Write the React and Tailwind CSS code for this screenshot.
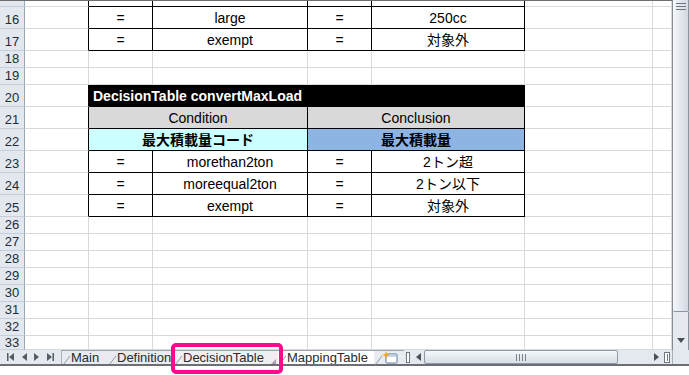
import React from 'react';

const font = "font-['Liberation_Sans','Noto_Sans_CJK_JP',sans-serif]";
const GRID = 'grid grid-cols-[25px_64px_64px_155px_64px_153px_128px_19px]';

// cell border presets
const G = 'border-r border-b border-[#d9d9d9]';
const K = 'border-r border-b border-black';
const AK = 'border-r border-b border-r-black border-b-[#d9d9d9]';

function Hd({ n, top }) {
  return (
    <div
      className={`flex justify-center overflow-hidden border-r border-b border-r-[#9aa7b8] border-b-[#c5ceda] bg-[#e3e8ef] text-[13px] leading-none text-[#1d2b3d] ${
        top ? 'items-start' : 'items-end pb-[2px]'
      }`}
    >
      {n}
    </div>
  );
}

function Cell({ cls = '', children }) {
  return (
    <div className={`flex items-center justify-center overflow-hidden whitespace-nowrap pt-[1px] text-[14px] leading-none text-black ${cls}`}>
      {children}
    </div>
  );
}

function Blank({ n, h, top }) {
  return (
    <div className={`${GRID} ${h}`}>
      <Hd n={n} top={top} />
      <Cell cls={G} />
      <Cell cls={G} />
      <Cell cls={G} />
      <Cell cls={G} />
      <Cell cls={G} />
      <Cell cls={G} />
      <Cell cls={G} />
    </div>
  );
}

function DataRow({ n, h, c, e, jp }) {
  return (
    <div className={`${GRID} ${h}`}>
      <Hd n={n} />
      <Cell cls={AK} />
      <Cell cls={K}>{n ? '=' : ''}</Cell>
      <Cell cls={K}>{c}</Cell>
      <Cell cls={K}>{n ? '=' : ''}</Cell>
      <Cell cls={`${K} ${jp ? 'text-[13px]' : ''}`}>{e}</Cell>
      <Cell cls={G} />
      <Cell cls={G} />
    </div>
  );
}

function VScroll() {
  return (
    <div className="flex h-[350px] w-[17px] flex-col border-l border-[#868d97] bg-[#e6eaf0]">
      <div className="flex h-[312px] flex-col items-center rounded-b-[2px] border-r border-b border-[#8d949e] bg-gradient-to-r from-[#f5f7fa] to-[#d3d9e2] pt-[2px]">
        <div className="mt-[1px] h-[1px] w-[10px] bg-[#6c737d]" />
        <div className="mt-[2px] h-[1px] w-[10px] bg-[#6c737d]" />
        <div className="mt-[2px] h-[1px] w-[10px] bg-[#6c737d]" />
      </div>
      <div className="flex flex-1 items-end justify-center border-r border-[#8d949e] pb-[7px]">
        <svg width="8" height="5" viewBox="0 0 8 5">
          <polygon points="0,0 8,0 4,5" fill="#4a5058" />
        </svg>
      </div>
    </div>
  );
}

function Tab({ w, label, bg = 'bg-[#e8ecf1]', notch }) {
  return (
    <div className={`relative flex h-full items-center overflow-hidden border-t border-[#9aa3ae] ${bg} ${w}`}>
      <svg className="absolute left-0 top-0" width="10" height="14" viewBox="0 0 10 14">
        <line x1="1" y1="14" x2="8" y2="5" stroke="#8f98a3" strokeWidth="1" />
      </svg>
      <span className="ml-[9px] whitespace-nowrap text-[13px] leading-none text-[#2b2b2b]">{label}</span>
      {notch ? (
        <svg className="absolute bottom-0 right-[2px]" width="5" height="5" viewBox="0 0 5 5">
          <polygon points="5,0 5,5 0,5" fill="#9aa3ae" />
        </svg>
      ) : null}
    </div>
  );
}

function TabBar() {
  return (
    <div className="relative flex h-[14px] w-[689px] bg-[#e4e9ef]">
      <div className="flex h-full w-[62px] items-center justify-around border-r border-[#a8b0bb] px-[3px]">
        <svg width="7" height="8" viewBox="0 0 7 8">
          <rect x="0" y="0" width="1.5" height="8" fill="#555c66" />
          <polygon points="7,0 7,8 2,4" fill="#555c66" />
        </svg>
        <svg width="5" height="8" viewBox="0 0 5 8">
          <polygon points="5,0 5,8 0,4" fill="#555c66" />
        </svg>
        <svg width="5" height="8" viewBox="0 0 5 8">
          <polygon points="0,0 0,8 5,4" fill="#555c66" />
        </svg>
        <svg width="7" height="8" viewBox="0 0 7 8">
          <polygon points="0,0 0,8 5,4" fill="#555c66" />
          <rect x="5.5" y="0" width="1.5" height="8" fill="#555c66" />
        </svg>
      </div>
      <Tab w="w-[46px]" label="Main" />
      <Tab w="w-[66px]" label="Definition" />
      <Tab w="w-[104px]" label="DecisionTable" bg="bg-[#eef0f3]" notch />
      <Tab w="w-[96px]" label="MappingTable" bg="bg-white" />
      <div className="relative flex h-full w-[30px] items-center border-t border-[#9aa3ae] bg-[#e8ecf1]">
        <svg className="absolute left-0 top-0" width="10" height="14" viewBox="0 0 10 14">
          <line x1="1" y1="14" x2="8" y2="5" stroke="#8f98a3" strokeWidth="1" />
        </svg>
        <svg className="ml-[8px]" width="16" height="13" viewBox="0 0 16 13">
          <rect x="4" y="3" width="11" height="9" rx="1" fill="#ffffff" stroke="#5d7ea8" />
          <rect x="5" y="4" width="9" height="2" fill="#c9d8ec" />
          <polygon points="4,0 5,3 8,4 5,5 4,8 3,5 0,4 3,3" fill="#f2a51b" />
        </svg>
      </div>
      <div className="flex h-full w-[8px] items-center justify-center">
        <div className="h-[11px] w-[4px] border border-[#6f7680] bg-white" />
      </div>
      <div className="flex h-full w-[12px] items-center justify-center">
        <svg width="5" height="8" viewBox="0 0 5 8">
          <polygon points="5,0 5,8 0,4" fill="#4a5058" />
        </svg>
      </div>
      <div className="flex h-full w-[194px] items-center justify-center rounded-[2px] border border-[#9199a4] bg-gradient-to-b from-[#f5f7fa] to-[#d8dee6]">
        <div className="flex gap-[2px]">
          <div className="h-[7px] w-[1px] bg-[#7b828c]" />
          <div className="h-[7px] w-[1px] bg-[#7b828c]" />
          <div className="h-[7px] w-[1px] bg-[#7b828c]" />
          <div className="h-[7px] w-[1px] bg-[#7b828c]" />
        </div>
      </div>
      <div className="h-full w-[32px]" />
      <div className="flex h-full w-[12px] items-center justify-center">
        <svg width="5" height="8" viewBox="0 0 5 8">
          <polygon points="0,0 0,8 5,4" fill="#4a5058" />
        </svg>
      </div>
      <div className="flex h-full w-[10px] items-center justify-center">
        <div className="flex h-[11px] w-[6px] items-center justify-center border border-[#6f7680] bg-white">
          <div className="h-[7px] w-[1px] bg-[#6f7680]" />
        </div>
      </div>
      <div className="h-full w-[17px] border-l border-[#a8b0bb] bg-[#e4e9ef]" />

      <div className="pointer-events-none absolute left-[171px] top-[-7px] h-[31px] w-[112px] rounded-[5px] border-[4px] border-[#ff0a8c]" />
    </div>
  );
}

export default function App() {
  return (
    <div className={`${font} relative h-[375px] w-[689px] overflow-hidden bg-white`}>
      <div className="flex h-[350px]">
        <div className="flex w-[672px] flex-col">
          <div className="h-[1px] bg-[#6e6e6e]" />
          <DataRow n="" h="h-[6px]" c="" e="" />
          <DataRow n="16" h="h-[22px]" c="large" e="250cc" />
          <DataRow n="17" h="h-[22px]" c="exempt" e="対象外" jp />
          <Blank n="18" h="h-[17px]" />
          <Blank n="19" h="h-[17px]" />

          <div className={`${GRID} h-[22px]`}>
            <Hd n="20" />
            <Cell cls={AK} />
            <div className="col-span-4 flex items-center overflow-hidden whitespace-nowrap border-r border-b border-black bg-black pl-[4px] pt-[1px] text-[14px] font-bold leading-none text-white">
              DecisionTable convertMaxLoad
            </div>
            <Cell cls={G} />
            <Cell cls={G} />
          </div>

          <div className={`${GRID} h-[22px]`}>
            <Hd n="21" />
            <Cell cls={AK} />
            <Cell cls={`col-span-2 bg-[#d9d9d9] ${K}`}>Condition</Cell>
            <Cell cls={`col-span-2 bg-[#d9d9d9] ${K}`}>Conclusion</Cell>
            <Cell cls={G} />
            <Cell cls={G} />
          </div>

          <div className={`${GRID} h-[22px]`}>
            <Hd n="22" />
            <Cell cls={AK} />
            <Cell cls={`col-span-2 bg-[#ccffff] font-bold text-[13px] ${K}`}>最大積載量コード</Cell>
            <Cell cls={`col-span-2 bg-[#8db4e2] font-bold text-[13px] ${K}`}>最大積載量</Cell>
            <Cell cls={G} />
            <Cell cls={G} />
          </div>

          <DataRow n="23" h="h-[22px]" c="morethan2ton" e="2トン超" jp />
          <DataRow n="24" h="h-[22px]" c="moreequal2ton" e="2トン以下" jp />
          <DataRow n="25" h="h-[22px]" c="exempt" e="対象外" jp />
          <Blank n="26" h="h-[17px]" />
          <Blank n="27" h="h-[17px]" />
          <Blank n="28" h="h-[17px]" />
          <Blank n="29" h="h-[17px]" />
          <Blank n="30" h="h-[17px]" />
          <Blank n="31" h="h-[17px]" />
          <Blank n="32" h="h-[17px]" />
          <Blank n="33" h="h-[14px]" top />
        </div>
        <VScroll />
      </div>
      <TabBar />
      <div className="h-[2px] bg-[#6b6f75]" />
    </div>
  );
}
